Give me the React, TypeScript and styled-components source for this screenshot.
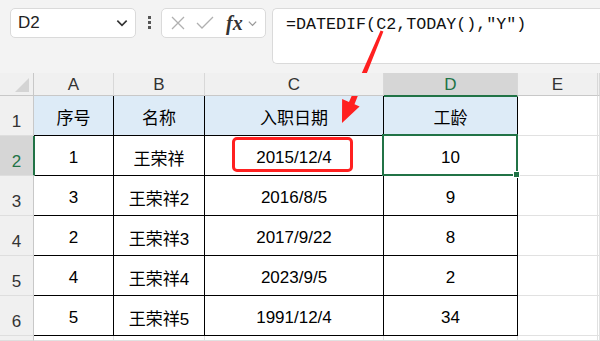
import React from 'react';
import styled, { createGlobalStyle } from 'styled-components';

const GlobalStyle = createGlobalStyle`
  html, body {
    margin: 0;
    padding: 0;
    background: #f3f3f3;
    overflow: hidden;
  }
  body {
    font-family: "Liberation Sans", "Noto Sans CJK SC", sans-serif;
  }
`;

const Page = styled.div`
  position: relative;
  width: 600px;
  height: 341px;
  overflow: hidden;
  background: #f3f3f3;
`;

const Toolbar = styled.div`
  display: flex;
  align-items: flex-start;
  height: 73px;
  padding: 8px 0 0 10px;
  box-sizing: border-box;
`;

const NameBox = styled.div`
  display: flex;
  align-items: center;
  justify-content: space-between;
  width: 126px;
  height: 30px;
  box-sizing: border-box;
  padding: 0 6px 0 7px;
  background: #fff;
  border: 1px solid #dadada;
  border-radius: 5px;
  font-size: 17px;
  color: #222;
`;

const Dots = styled.div`
  display: flex;
  flex-direction: column;
  gap: 2px;
  margin: 8px 10px 0 12px;
  span {
    width: 3px;
    height: 3px;
    background: #555;
  }
`;

const FxBox = styled.div`
  display: flex;
  align-items: center;
  width: 105px;
  height: 30px;
  box-sizing: border-box;
  padding: 0 4px 0 8px;
  background: #fff;
  border: 1px solid #dadada;
  border-radius: 5px;
  gap: 10px;
`;

const Fx = styled.span`
  font-family: "Liberation Serif", serif;
  font-style: italic;
  font-weight: bold;
  font-size: 20px;
  color: #333;
  margin-left: 2px;
  margin-right: -6px;
`;

const FormulaBox = styled.div`
  flex: 1;
  height: 56px;
  margin-left: 6px;
  box-sizing: border-box;
  padding: 4px 0 0 13px;
  background: #fff;
  border: 1px solid #dadada;
  border-right: none;
  border-radius: 5px 0 0 5px;
  font-family: "Liberation Mono", "DejaVu Sans Mono", monospace;
  font-size: 16.7px;
  line-height: 24px;
  color: #111;
`;

const Sheet = styled.div`
  display: grid;
  grid-template-columns: 34px 80px 91px 179px 134px 80px 1fr;
  grid-template-rows: 23px repeat(6, 40px) 1fr;
  height: 268px;
  background: #fff;
`;

const Corner = styled.div`
  position: relative;
  background: #f0f0f0;
  border-right: 1px solid #c8c8c8;
  border-bottom: 1px solid #c8c8c8;
  &::after {
    content: '';
    position: absolute;
    right: 4px;
    bottom: 3px;
    width: 0;
    height: 0;
    border-left: 14px solid transparent;
    border-bottom: 14px solid #d4d4d4;
  }
`;

const ColHead = styled.div<{ $active?: boolean }>`
  display: flex;
  align-items: center;
  justify-content: center;
  background: ${p => (p.$active ? '#d6d6d6' : '#f0f0f0')};
  border-right: 1px solid #d8d8d8;
  border-bottom: ${p => (p.$active ? '2px solid #217346' : '1px solid #c8c8c8')};
  margin-bottom: ${p => (p.$active ? '-1px' : '0')};
  font-size: 17px;
  color: ${p => (p.$active ? '#217346' : '#333')};
  padding-top: 1px;
  z-index: 1;
`;

const RowHead = styled.div<{ $active?: boolean }>`
  display: flex;
  align-items: flex-end;
  justify-content: center;
  padding-bottom: 3px;
  box-sizing: border-box;
  background: ${p => (p.$active ? '#d6d6d6' : '#f0f0f0')};
  border-right: ${p => (p.$active ? '2px solid #217346' : '1px solid #c8c8c8')};
  margin-right: ${p => (p.$active ? '-1px' : '0')};
  border-bottom: 1px solid #dedede;
  font-size: 17px;
  color: ${p => (p.$active ? '#217346' : '#333')};
  z-index: 1;
`;

const Cell = styled.div<{ $head?: boolean; $table?: boolean }>`
  display: flex;
  align-items: center;
  justify-content: center;
  padding-top: ${p => (p.$head ? '1px' : '4px')};
  box-sizing: border-box;
  background: ${p => (p.$head ? '#ddebf7' : '#fff')};
  border-right: 1px solid ${p => (p.$table ? '#000' : '#e1e1e1')};
  border-bottom: 1px solid ${p => (p.$table ? '#000' : '#e1e1e1')};
  font-size: 17px;
  color: #000;
  white-space: nowrap;
`;

const Overlay = styled.div`
  position: absolute;
  pointer-events: none;
`;

const Selection = styled(Overlay)`
  left: 382px;
  top: 134px;
  width: 136px;
  height: 42px;
  box-sizing: border-box;
  border: 2px solid #217346;
  &::after {
    content: '';
    position: absolute;
    right: -4px;
    bottom: -4px;
    width: 5px;
    height: 5px;
    background: #217346;
    border: 1px solid #fff;
  }
`;

const Highlight = styled(Overlay)`
  left: 232px;
  top: 137px;
  width: 121px;
  height: 35px;
  box-sizing: border-box;
  border: 3px solid #ff2020;
  border-radius: 5px;
`;

const ArrowLayer = styled.svg`
  position: absolute;
  left: 0;
  top: 0;
  pointer-events: none;
`;

const Chevron = ({ size = 12, color = '#444' }: { size?: number; color?: string }) => (
  <svg width={size} height={size} viewBox="0 0 12 12">
    <path d="M2 4 L6 8 L10 4" fill="none" stroke={color} strokeWidth="1.4" />
  </svg>
);

const headers = ['序号', '名称', '入职日期', '工龄'];
const rows = [
  ['1', '王荣祥', '2015/12/4', '10'],
  ['3', '王荣祥2', '2016/8/5', '9'],
  ['2', '王荣祥3', '2017/9/22', '8'],
  ['4', '王荣祥4', '2023/9/5', '2'],
  ['5', '王荣祥5', '1991/12/4', '34'],
];
const letters = ['A', 'B', 'C', 'D', 'E', ''];

export default function App() {
  return (
    <Page>
      <GlobalStyle />
      <Toolbar>
        <NameBox>
          <span>D2</span>
          <Chevron size={14} color="#333" />
        </NameBox>
        <Dots>
          <span />
          <span />
          <span />
        </Dots>
        <FxBox>
          <svg width="16" height="16" viewBox="0 0 16 16">
            <path d="M2 2 L14 14 M14 2 L2 14" stroke="#b0b0b0" strokeWidth="1.3" fill="none" />
          </svg>
          <svg width="18" height="16" viewBox="0 0 18 16">
            <path d="M1 8 L6 13 L17 2" stroke="#b0b0b0" strokeWidth="1.3" fill="none" />
          </svg>
          <Fx>fx</Fx>
          <Chevron size={11} color="#999" />
        </FxBox>
        <FormulaBox>=DATEDIF(C2,TODAY(),"Y")</FormulaBox>
      </Toolbar>

      <Sheet>
        <Corner />
        {letters.map((l, i) => (
          <ColHead key={i} $active={l === 'D'}>
            {l}
          </ColHead>
        ))}

        <RowHead>1</RowHead>
        {headers.map(h => (
          <Cell key={h} $head $table>
            {h}
          </Cell>
        ))}
        <Cell />
        <Cell />

        {rows.map((r, i) => (
          <React.Fragment key={i}>
            <RowHead $active={i === 0}>{i + 2}</RowHead>
            {r.map((v, j) => (
              <Cell key={j} $table>
                {v}
              </Cell>
            ))}
            <Cell />
            <Cell />
          </React.Fragment>
        ))}

        <RowHead />
        <Cell />
        <Cell />
        <Cell />
        <Cell />
        <Cell />
        <Cell />
      </Sheet>

      <Selection />
      <Highlight />
      <ArrowLayer width="600" height="341" viewBox="0 0 600 341">
        <polygon
          points="383.4,31.6 354.5,104.3 359.6,106.6 342,123 342.1,99.0 349.0,102.1 380.6,30.4"
          fill="#ff2020"
        />
      </ArrowLayer>
    </Page>
  );
}
